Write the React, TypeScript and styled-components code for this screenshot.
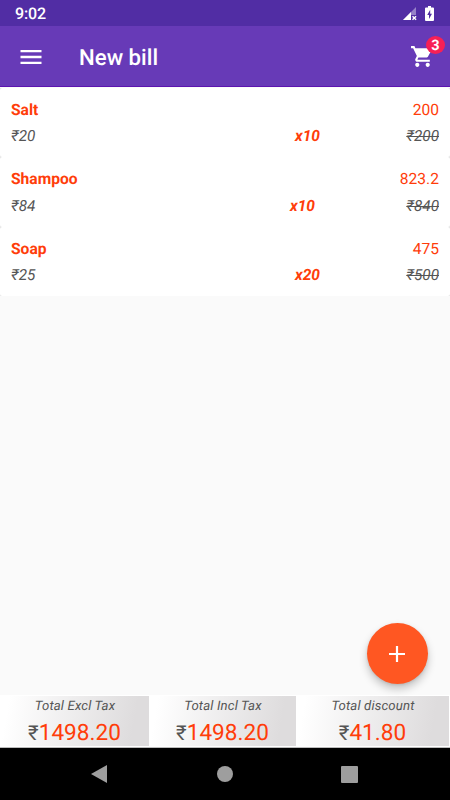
import React from "react";
import styled, { createGlobalStyle } from "styled-components";

const GlobalStyle = createGlobalStyle`
  * { box-sizing: border-box; }
  body { margin: 0; background: #fafafa; }
`;

const Screen = styled.div`
  width: 450px;
  height: 800px;
  display: flex;
  flex-direction: column;
  overflow: hidden;
  background: #fafafa;
  font-family: Roboto, "Noto Sans", sans-serif;
  color: #555;
  text-rendering: geometricPrecision;
`;

const StatusBar = styled.header`
  height: 26px;
  flex: none;
  display: flex;
  align-items: center;
  justify-content: space-between;
  padding: 1px 15px 0;
  background: #512da4;
  color: #fff;
  font-size: 16px;
  font-weight: 500;
  letter-spacing: -0.1px;
`;

const Clock = styled.span`
  line-height: 24px;
  padding-top: 1px;
`;

const StatusIcons = styled.div`
  display: flex;
  align-items: center;
  gap: 7px;
  svg { display: block; }
`;

const AppBar = styled.div`
  height: 61px;
  flex: none;
  display: flex;
  align-items: center;
  padding: 1px 15px 0 16.5px;
  background: #673ab7;
  border-bottom: 1px solid #5c14b0;
  color: #fff;
`;

const Title = styled.h1`
  flex: 1;
  margin: 2px 0 0 34.5px;
  font-size: 22.2px;
  line-height: 28px;
  font-weight: 500;
`;

const Cart = styled.div`
  position: relative;
  width: 25px;
  height: 25px;
  svg { display: block; }
`;

const Badge = styled.span`
  position: absolute;
  top: -8px;
  left: 16px;
  width: 19px;
  height: 18px;
  border-radius: 50%;
  background: #f72055;
  font-size: 14.5px;
  line-height: 19px;
  font-weight: 700;
  text-align: center;
`;

const Bill = styled.main`
  flex: 1;
  padding-top: 0.5px;
`;

const Corners = styled.div`
  background: #e4e4e4;
  height: 69.5px;
`;

const Card = styled.article`
  height: 69.5px;
  padding: 10.4px 11px 0;
  border-radius: 2.5px;
  background: #fff;
`;

const Row = styled.div`
  display: flex;
  justify-content: space-between;
  height: 26.6px;
  line-height: 24px;
`;

const Name = styled.span`
  color: #ff3d0a;
  font-size: 15.6px;
  font-weight: 700;
`;

const Amount = styled.span`
  color: #ff3d0a;
  font-size: 15.6px;
`;

const Price = styled.span`
  flex: 1;
  font-size: 15.3px;
  font-style: italic;
`;

const Quantity = styled.span<{ $inset: number }>`
  margin-right: ${(p) => p.$inset}px;
  color: #ff3d0a;
  font-size: 15.5px;
  font-style: italic;
  font-weight: 700;
`;

const OldPrice = styled.span`
  width: 33px;
  font-size: 15.3px;
  font-style: italic;
  text-align: right;
  text-decoration: line-through;
  text-decoration-thickness: 1px;
`;

const AddButton = styled.button`
  position: absolute;
  left: 367px;
  top: 623px;
  width: 61px;
  height: 61px;
  padding: 0 1px 0 0;
  border: 0;
  border-radius: 50%;
  display: grid;
  place-items: center;
  background: #ff5722;
  box-shadow: 0 5px 9px rgba(0, 0, 0, 0.22), 0 1px 3px rgba(0, 0, 0, 0.1);
  svg { display: block; }
`;

const Totals = styled.footer`
  height: 53px;
  flex: none;
  display: grid;
  grid-template-columns: 149px 147px 153px;
  padding-top: 1px;
  background: #fff;
  border-bottom: 1px solid #bbb;
`;

const Total = styled.section`
  height: 50px;
  text-align: center;
  white-space: nowrap;
  background: linear-gradient(100deg, #fff 6%, #dedcdd 88%);
`;

const TotalLabel = styled.div`
  height: 20px;
  padding-left: 1px;
  font-size: 13.2px;
  line-height: 21px;
  font-style: italic;
  letter-spacing: 0.15px;
`;

const TotalValue = styled.div`
  height: 30px;
  color: #ff3d0a;
  font-size: 22.6px;
  line-height: 33px;
`;

const Currency = styled.span`
  color: #555;
  font-size: 20.5px;
`;

const NavBar = styled.nav`
  height: 52px;
  flex: none;
  display: grid;
  grid-template-columns: 198px 53px 196px;
  align-items: center;
  background: #000;
  svg { display: block; justify-self: center; }
`;

const items = [
  { name: "Salt", amount: "200", price: "₹20", quantity: "x10", old: "₹200", inset: 86 },
  { name: "Shampoo", amount: "823.2", price: "₹84", quantity: "x10", old: "₹840", inset: 91 },
  { name: "Soap", amount: "475", price: "₹25", quantity: "x20", old: "₹500", inset: 86 },
];

const totals = [
  { label: "Total Excl Tax", value: "1498.20" },
  { label: "Total Incl Tax", value: "1498.20" },
  { label: "Total discount", value: "41.80" },
];

export default function App() {
  return (
    <Screen>
      <GlobalStyle />
      <StatusBar>
        <Clock>9:02</Clock>
        <StatusIcons>
          <svg width="15" height="14" viewBox="0 0 15 14">
            <path d="M0 13 13 0v8H8v5z" fill="#fff" fillOpacity=".4" />
            <path d="M0 13 8 5v8z" fill="#fff" />
            <path d="m9.5 9.2 3.600 3.600m0-3.600-3.600 3.600" stroke="#fff" strokeWidth="1.4" />
          </svg>
          <svg width="10" height="15" viewBox="0 0 10 15">
            <path d="M3 0h3v1.5h2q1 0 1 1V14q0 1-1 1H1q-1 0-1-1V2.500q0-1 1-1h2z" fill="#fff" />
            <path d="M5.200 3.800 2.200 9H4v4l3-5.300H5.200z" fill="#512da4" />
          </svg>
        </StatusIcons>
      </StatusBar>
      <AppBar>
        <svg width="28" height="28" viewBox="0 0 24 24" fill="#fff">
          <path d="M3 18h18v-2H3zm0-5h18v-2H3zm0-7v2h18V6z" />
        </svg>
        <Title>New bill</Title>
        <Cart>
          <svg width="25" height="25" viewBox="0 0 24 24" fill="#fff">
            <path d="M7 18c-1.100 0-1.990.9-1.990 2S5.900 22 7 22s2-.9 2-2-.9-2-2-2zM1 2v2h2l3.600 7.590-1.350 2.450c-.16.28-.25.61-.25.96 0 1.100.9 2 2 2h12v-2H7.420c-.14 0-.25-.11-.25-.25l.03-.12.9-1.630h7.450c.75 0 1.410-.41 1.750-1.030l3.580-6.490A1 1 0 0 0 20 4H5.210l-.94-2H1zm16 16c-1.100 0-1.990.9-1.990 2s.89 2 1.990 2 2-.9 2-2-.9-2-2-2z" />
          </svg>
          <Badge>3</Badge>
        </Cart>
      </AppBar>
      <Bill>
        {items.map((item) => (
          <Corners key={item.name}>
            <Card>
              <Row>
                <Name>{item.name}</Name>
                <Amount>{item.amount}</Amount>
              </Row>
              <Row>
                <Price>{item.price}</Price>
                <Quantity $inset={item.inset}>{item.quantity}</Quantity>
                <OldPrice>{item.old}</OldPrice>
              </Row>
            </Card>
          </Corners>
        ))}
      </Bill>
      <AddButton aria-label="Add item">
        <svg width="16" height="16" viewBox="0 0 16 16">
          <path d="M8 0v16M0 8h16" stroke="#fff" strokeWidth="2.200" />
        </svg>
      </AddButton>
      <Totals>
        {totals.map((total) => (
          <Total key={total.label}>
            <TotalLabel>{total.label}</TotalLabel>
            <TotalValue>
              <Currency>₹</Currency>
              {total.value}
            </TotalValue>
          </Total>
        ))}
      </Totals>
      <NavBar>
        <svg width="16" height="18" viewBox="0 0 16 18">
          <path d="M16 0v18L0 9z" fill="#9e9e9e" />
        </svg>
        <svg width="16" height="16" viewBox="0 0 16 16">
          <circle cx="8" cy="8" r="8" fill="#9e9e9e" />
        </svg>
        <svg width="17" height="17" viewBox="0 0 17 17">
          <rect width="17" height="17" rx="1" fill="#9e9e9e" />
        </svg>
      </NavBar>
    </Screen>
  );
}
